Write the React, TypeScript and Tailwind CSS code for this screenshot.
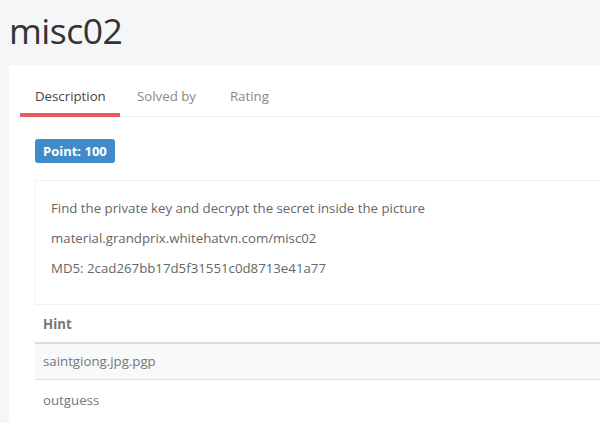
import React, { useState } from 'react';

const tabs = ['Description', 'Solved by', 'Rating'];

export default function App() {
  const [active, setActive] = useState(0);

  return (
    <main className="min-h-screen w-[600px] h-[423px] overflow-hidden bg-[#f5f6f8] text-[#555] font-['Open_Sans',sans-serif]">
      {/* タイトル */}
      <h1 className="pl-[9px] pt-[6px] h-[65px] text-[35.5px] leading-[48px] text-[#333] tracking-[-0.5px]">misc02</h1>

      {/* カード本体 */}
      <div className="ml-[9px] w-[620px] h-[400px] bg-white pl-[11px] pt-[14px]">
        <div className="flex border-b border-[#f0f0f0] h-[38px]">
          {tabs.map((t, i) => (
            <button
              key={t}
              onClick={() => setActive(i)}
              className={`h-[38px] px-[15px] text-[13.25px] ${i === active ? 'w-[100px] border-b-4 border-[#e8595f] text-[#444] pt-[1px]' : 'text-[#888] pb-[3px]'} ${i === 1 ? 'pl-[17px] pr-[19px]' : ''}`}
            >
              {t}
            </button>
          ))}
        </div>

        <div className="pl-[15px] pt-[21px]">
          <span className="inline-block h-[24px] px-[8px] rounded-[3px] bg-[#428bca] text-white text-[13px] font-bold leading-[24px]">Point: 100</span>

          <div className="mt-[17px] h-[125px] border border-[#f2f2f2] pl-[15px] pt-[17px] text-[13.25px] text-[#666] space-y-[9px] leading-[21px]">
            <p>Find the private key and decrypt the secret inside the picture</p>
            <p>material.grandprix.whitehatvn.com/misc02</p>
            <p>MD5: 2cad267bb17d5f31551c0d8713e41a77</p>
          </div>

          <table className="w-full text-[13.25px] text-[#777]">
            <thead>
              <tr className="border-b-2 border-[#ddd]">
                <th className="h-[38px] pl-[8px] pt-[2px] text-left font-bold text-[#777]">Hint</th>
              </tr>
            </thead>
            <tbody>
              <tr className="bg-[#f8f9fa] border-b border-[#ddd]">
                <td className="h-[36px] pl-[8px] pt-[1px]">saintgiong.jpg.pgp</td>
              </tr>
              <tr>
                <td className="h-[40px] pl-[8px] pt-[3px]">outguess</td>
              </tr>
            </tbody>
          </table>
        </div>
      </div>
    </main>
  );
}
